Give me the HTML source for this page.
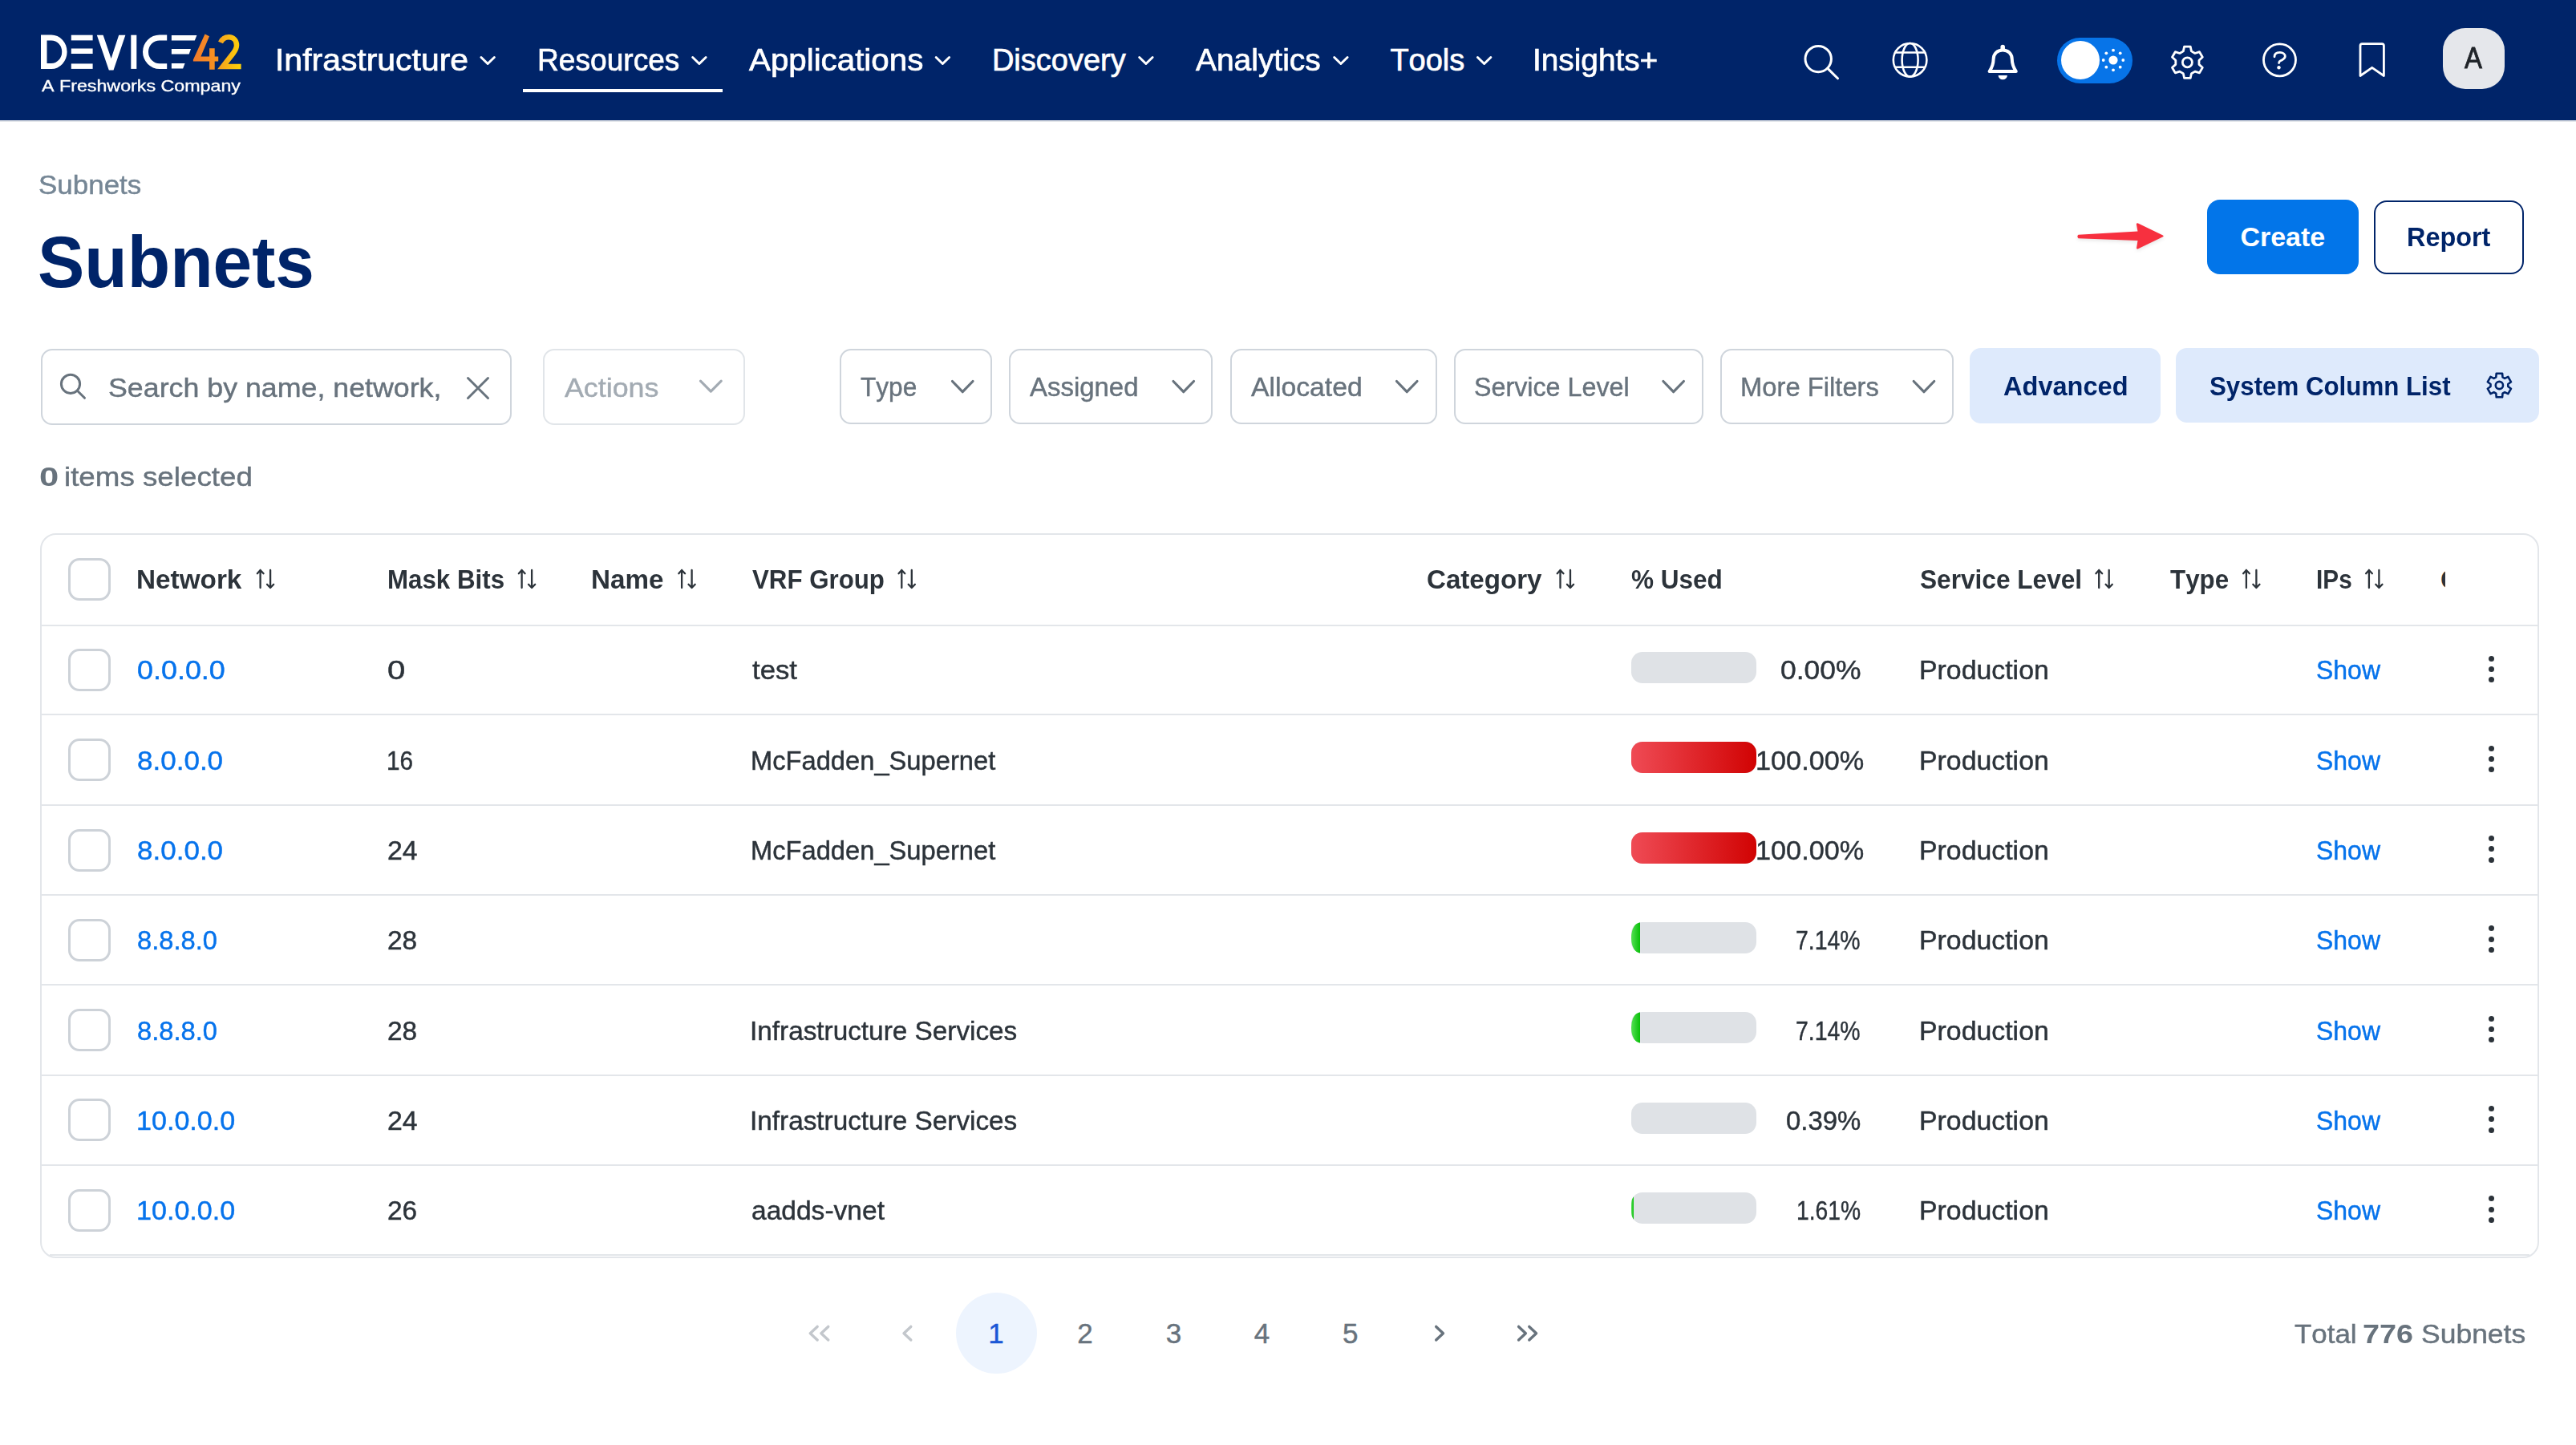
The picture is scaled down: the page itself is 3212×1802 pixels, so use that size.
<!DOCTYPE html><html><head><meta charset="utf-8"><style>
html,body{margin:0;padding:0;background:#fff;width:3212px;height:1802px;overflow:hidden;position:relative}
body{font-family:"Liberation Sans",sans-serif;font-kerning:none}
.t{position:absolute;white-space:nowrap;transform-origin:0 0}
.b{position:absolute;box-sizing:border-box}
</style></head><body>
<div class="b" style="left:0px;top:0px;width:3212px;height:150px;background:#002469"></div>
<div class="b" style="left:0px;top:150px;width:3212px;height:2px;background:#E4E7EB"></div>
<svg class="b" style="left:40px;top:30px" width="280" height="70" viewBox="40 30 280 70">
<defs>
<linearGradient id="g4" x1="0" x2="1" y1="0" y2="0"><stop offset="0" stop-color="#F37A2B"/><stop offset="1" stop-color="#F7951F"/></linearGradient>
<linearGradient id="g2" x1="0" x2="1" y1="0" y2="0"><stop offset="0" stop-color="#F6A51D"/><stop offset="1" stop-color="#FFD407"/></linearGradient>
</defs>
<path fill="#fff" fill-rule="evenodd" d="M51,43.4 H64 A19.6,21.3 0 0 1 64,86 H51 Z M58.5,50.4 H64 A13.2,14.25 0 0 1 64,78.9 H58.5 Z"/>
<rect fill="#fff" x="88.8" y="43.7" width="26.8" height="6.7"/>
<rect fill="#fff" x="88.8" y="60.5" width="26.8" height="6.5"/>
<rect fill="#fff" x="88.8" y="79.4" width="26.8" height="6.5"/>
<polygon fill="#fff" points="120.8,43.7 128.6,43.7 138.6,73 148.2,43.7 156.4,43.7 141.5,87.6 135.8,87.6"/>
<rect fill="#fff" x="163.3" y="43.7" width="7" height="42.2"/>
<path fill="#fff" d="M208.2,43.4 H199 A21,21.3 0 0 0 199,86 H208.2 V79.2 H199 A14,14.4 0 0 1 199,50.4 H208.2 Z"/>
<polygon fill="#fff" points="213.9,44 245.4,44 242.8,50.6 213.9,50.6"/>
<polygon fill="#fff" points="213.9,61.1 238,61.1 235.7,67.5 213.9,67.5"/>
<polygon fill="#fff" points="213.9,79.1 230.6,79.1 228.1,85.6 213.9,85.6"/>
<polygon fill="url(#g4)" points="255.5,42.6 261,45.2 250.4,70.6 261.1,70.6 261.1,60.3 267.7,60.3 267.7,70.6 272.2,70.6 272.2,76.6 267.7,76.6 267.7,86.7 261.1,86.7 261.1,76.6 240.9,76.6 240.9,74.5"/>
<path fill="none" stroke="url(#g2)" stroke-width="6.5" d="M275,53 C277,48.5 280.5,46.2 285.3,46.2 C291.2,46.2 295,50.6 295,56.3 C295,60.3 293.2,63.4 290.6,66.6 L277.8,82.9 L300.6,82.9"/>
</svg>
<div class="t" style="left:52.05px;top:97.40px;font-size:20px;line-height:20px;font-weight:400;color:#fff;transform:scaleX(1.1621);-webkit-text-stroke:0.35px #fff;">A Freshworks Company</div>
<div class="t" style="left:343.22px;top:56.25px;font-size:38px;line-height:38px;font-weight:400;color:#fff;transform:scaleX(1.0770);-webkit-text-stroke:0.7px #fff;">Infrastructure</div>
<svg class="b" style="left:596px;top:66px" width="24" height="20" viewBox="596 66 24 20"><path d="M599.95,71.5 L608.15,79.5 L616.35,71.5" fill="none" stroke="#fff" stroke-width="3" stroke-linecap="round" stroke-linejoin="round"/></svg>
<div class="t" style="left:669.96px;top:56.25px;font-size:38px;line-height:38px;font-weight:400;color:#fff;transform:scaleX(0.9766);-webkit-text-stroke:0.7px #fff;">Resources</div>
<svg class="b" style="left:860px;top:66px" width="24" height="20" viewBox="860 66 24 20"><path d="M863.7,71.5 L871.9,79.5 L880.1,71.5" fill="none" stroke="#fff" stroke-width="3" stroke-linecap="round" stroke-linejoin="round"/></svg>
<div class="t" style="left:933.67px;top:56.25px;font-size:38px;line-height:38px;font-weight:400;color:#fff;transform:scaleX(1.0604);-webkit-text-stroke:0.7px #fff;">Applications</div>
<svg class="b" style="left:1164px;top:66px" width="24" height="20" viewBox="1164 66 24 20"><path d="M1167.2,71.5 L1175.4,79.5 L1183.6,71.5" fill="none" stroke="#fff" stroke-width="3" stroke-linecap="round" stroke-linejoin="round"/></svg>
<div class="t" style="left:1236.88px;top:56.25px;font-size:38px;line-height:38px;font-weight:400;color:#fff;-webkit-text-stroke:0.7px #fff;">Discovery</div>
<svg class="b" style="left:1417px;top:66px" width="24" height="20" viewBox="1417 66 24 20"><path d="M1420.7,71.5 L1428.9,79.5 L1437.1,71.5" fill="none" stroke="#fff" stroke-width="3" stroke-linecap="round" stroke-linejoin="round"/></svg>
<div class="t" style="left:1491.17px;top:56.25px;font-size:38px;line-height:38px;font-weight:400;color:#fff;transform:scaleX(1.0242);-webkit-text-stroke:0.7px #fff;">Analytics</div>
<svg class="b" style="left:1660px;top:66px" width="24" height="20" viewBox="1660 66 24 20"><path d="M1663.7,71.5 L1671.9,79.5 L1680.1,71.5" fill="none" stroke="#fff" stroke-width="3" stroke-linecap="round" stroke-linejoin="round"/></svg>
<div class="t" style="left:1733.40px;top:56.25px;font-size:38px;line-height:38px;font-weight:400;color:#fff;-webkit-text-stroke:0.7px #fff;">Tools</div>
<svg class="b" style="left:1839px;top:66px" width="24" height="20" viewBox="1839 66 24 20"><path d="M1842.45,71.5 L1850.65,79.5 L1858.85,71.5" fill="none" stroke="#fff" stroke-width="3" stroke-linecap="round" stroke-linejoin="round"/></svg>
<div class="t" style="left:1911.42px;top:56.25px;font-size:38px;line-height:38px;font-weight:400;color:#fff;transform:scaleX(1.0202);-webkit-text-stroke:0.7px #fff;">Insights+</div>
<div class="b" style="left:652px;top:111px;width:249px;height:4px;background:#fff"></div>
<svg class="b" style="left:2230px;top:30px" width="310" height="80" viewBox="2230 30 310 80">
<g fill="none" stroke="#fff" stroke-width="3" stroke-linecap="round" stroke-linejoin="round">
<circle cx="2267.2" cy="73.6" r="16.2"/>
<line x1="2279" y1="85.4" x2="2291.5" y2="97.8"/>
<circle cx="2381.6" cy="74.8" r="20.8" stroke-width="2.6"/>
<ellipse cx="2381.6" cy="74.8" rx="10" ry="20.8" stroke-width="2.6"/>
<line x1="2363.2" y1="65.5" x2="2400" y2="65.5" stroke-width="2.6"/>
<line x1="2364" y1="83.8" x2="2399.2" y2="83.8" stroke-width="2.6"/>
<path d="M2480.6,89 L2513.8,89 C2510.8,84.5 2508.8,80 2508.8,74 C2508.8,67 2504,62.4 2497.2,62.4 C2490.4,62.4 2485.6,67 2485.6,74 C2485.6,80 2483.6,84.5 2480.6,89 Z" stroke-width="4"/>
<line x1="2497.2" y1="58.6" x2="2497.2" y2="61" stroke-width="5.5"/>
</g>
</svg>
<svg class="b" style="left:2485px;top:90px" width="25" height="12" viewBox="2485 90 25 12"><path d="M2491.6,94 H2502.9 A5.65,5.4 0 0 1 2491.6,94 Z" fill="#fff"/></svg>
<div class="b" style="left:2565px;top:47px;width:94px;height:57px;background:#0774E8;border-radius:29px"></div>
<div class="b" style="left:2570px;top:51px;width:48px;height:48px;background:#fff;border-radius:50%"></div>
<svg class="b" style="left:2615px;top:55px" width="40" height="40" viewBox="2615 55 40 40"><circle cx="2635" cy="75" r="5.6" fill="#fff"/><circle cx="2647.30" cy="75.00" r="1.9" fill="#fff"/><circle cx="2643.70" cy="83.70" r="1.9" fill="#fff"/><circle cx="2635.00" cy="87.30" r="1.9" fill="#fff"/><circle cx="2626.30" cy="83.70" r="1.9" fill="#fff"/><circle cx="2622.70" cy="75.00" r="1.9" fill="#fff"/><circle cx="2626.30" cy="66.30" r="1.9" fill="#fff"/><circle cx="2635.00" cy="62.70" r="1.9" fill="#fff"/><circle cx="2643.70" cy="66.30" r="1.9" fill="#fff"/></svg>
<svg class="b" style="left:2700px;top:50px" width="56" height="56" viewBox="2700 50 56 56"><path d="M2722.34,63.89 L2723.58,58.17 L2731.22,58.17 L2732.46,63.89 L2736.91,66.46 L2742.49,64.68 L2746.31,71.29 L2741.98,75.23 L2741.98,80.37 L2746.31,84.31 L2742.49,90.92 L2736.91,89.14 L2732.46,91.71 L2731.22,97.43 L2723.58,97.43 L2722.34,91.71 L2717.89,89.14 L2712.31,90.92 L2708.49,84.31 L2712.82,80.37 L2712.82,75.23 L2708.49,71.29 L2712.31,64.68 L2717.89,66.46 Z" fill="none" stroke="#fff" stroke-width="2.8" stroke-linejoin="round"/><circle cx="2727.4" cy="77.8" r="6" fill="none" stroke="#fff" stroke-width="2.8"/></svg>
<svg class="b" style="left:2815px;top:47px" width="55" height="56" viewBox="2815 47 55 56"><circle cx="2842.5" cy="74.8" r="20" fill="none" stroke="#fff" stroke-width="2.8"/><path d="M2836,70.8 C2836,67 2839,65.4 2842.8,65.4 C2846.6,65.4 2849.3,67.4 2849.3,70.3 C2849.3,73.4 2846.3,74.4 2843.9,75.6 C2842.1,76.5 2841.6,77.3 2841.6,78.6" fill="none" stroke="#fff" stroke-width="2.8" stroke-linecap="round"/><circle cx="2841.5" cy="84.2" r="2.2" fill="#fff"/></svg>
<svg class="b" style="left:2935px;top:47px" width="45" height="56" viewBox="2935 47 45 56"><path d="M2943,57 Q2943,54.6 2945.4,54.6 L2970,54.6 Q2972.4,54.6 2972.4,57 L2972.4,94.5 L2957.7,84.3 L2943,94.5 Z" fill="none" stroke="#fff" stroke-width="2.8" stroke-linejoin="round"/></svg>
<div class="b" style="left:3046px;top:35px;width:77px;height:76px;background:#E5E7EB;border-radius:28px"></div>
<div class="t" style="left:3073.34px;top:54.10px;font-size:37px;line-height:37px;font-weight:400;color:#1F2328;transform:scaleX(0.8886);-webkit-text-stroke:0.8px #1F2328;">A</div>
<div class="t" style="left:48.31px;top:213.20px;font-size:34px;line-height:34px;font-weight:400;color:#758695;transform:scaleX(1.0280);-webkit-text-stroke:0.45px #758695;">Subnets</div>
<div class="t" style="left:47.48px;top:281.60px;font-size:90px;line-height:90px;font-weight:700;color:#002469;transform:scaleX(0.9715);">Subnets</div>
<svg class="b" style="left:2585px;top:270px" width="120" height="50" viewBox="2585 270 120 50"><path d="M2591.5,292.8 L2665.5,288.6 L2663.8,279.2 Q2664.5,277.8 2666,278.4 L2697,293.6 Q2698.2,294.5 2697,295.3 L2666,310.2 Q2664.5,310.9 2664,309.4 L2665.5,300 L2591.5,297.2 Q2589.2,295 2591.5,292.8 Z" fill="#F7303F" style="filter:drop-shadow(0 2px 2px rgba(0,0,0,0.10))"/></svg>
<div class="b" style="left:2752px;top:249px;width:189px;height:93px;background:#0275E9;border-radius:16px"></div>
<div class="t" style="left:2793.41px;top:277.90px;font-size:34px;line-height:34px;font-weight:700;color:#fff;">Create</div>
<div class="b" style="left:2960px;top:249.5px;width:187px;height:92.0px;border:2.6px solid #002469;border-radius:16px;background:#fff"></div>
<div class="t" style="left:3001.33px;top:277.90px;font-size:34px;line-height:34px;font-weight:700;color:#002469;transform:scaleX(0.9526);">Report</div>
<div class="b" style="left:50.5px;top:434.5px;width:587.0px;height:95.5px;border:2px solid #CFD5DC;border-radius:14px"></div>
<svg class="b" style="left:70px;top:460px" width="42" height="42" viewBox="70 460 42 42"><circle cx="88" cy="478.8" r="11.6" fill="none" stroke="#68737D" stroke-width="3"/><line x1="96.4" y1="487.2" x2="105.5" y2="496.3" stroke="#68737D" stroke-width="3" stroke-linecap="round"/></svg>
<div class="t" style="left:134.78px;top:466.00px;font-size:34px;line-height:34px;font-weight:400;color:#68737D;transform:scaleX(1.0518);-webkit-text-stroke:0.45px #68737D;">Search by name, network,</div>
<svg class="b" style="left:578px;top:466px" width="36" height="34" viewBox="578 466 36 34"><path d="M583.5,471.5 L608.5,496.5 M608.5,471.5 L583.5,496.5" stroke="#68737D" stroke-width="3" stroke-linecap="round"/></svg>
<div class="b" style="left:676.5px;top:434.5px;width:252.0px;height:95.0px;border:2px solid #E1E5E9;border-radius:14px"></div>
<div class="t" style="left:703.93px;top:466.00px;font-size:34px;line-height:34px;font-weight:400;color:#A3ABB3;transform:scaleX(1.0526);-webkit-text-stroke:0.45px #A3ABB3;">Actions</div>
<svg class="b" style="left:868px;top:469px" width="37" height="25" viewBox="868 469 37 25"><path d="M873.5,475.1 L886.35,488.1 L899.2,475.1" fill="none" stroke="#A3ABB3" stroke-width="3.2" stroke-linecap="round" stroke-linejoin="round"/></svg>
<div class="b" style="left:1046.5px;top:434.5px;width:190.0px;height:94.5px;border:2px solid #CFD5DC;border-radius:14px"></div>
<div class="t" style="left:1073.19px;top:465.20px;font-size:34px;line-height:34px;font-weight:400;color:#68737D;transform:scaleX(0.9289);-webkit-text-stroke:0.45px #68737D;">Type</div>
<svg class="b" style="left:1182px;top:470px" width="37" height="25" viewBox="1182 470 37 25"><path d="M1187.5,475.5 L1200.25,488.7 L1213.0,475.5" fill="none" stroke="#68737D" stroke-width="3.2" stroke-linecap="round" stroke-linejoin="round"/></svg>
<div class="b" style="left:1257.5px;top:434.5px;width:254.5px;height:94.5px;border:2px solid #CFD5DC;border-radius:14px"></div>
<div class="t" style="left:1284.24px;top:465.20px;font-size:34px;line-height:34px;font-weight:400;color:#68737D;transform:scaleX(0.9687);-webkit-text-stroke:0.45px #68737D;">Assigned</div>
<svg class="b" style="left:1457px;top:470px" width="38" height="25" viewBox="1457 470 38 25"><path d="M1463.0,475.5 L1475.75,488.7 L1488.5,475.5" fill="none" stroke="#68737D" stroke-width="3.2" stroke-linecap="round" stroke-linejoin="round"/></svg>
<div class="b" style="left:1533.5px;top:434.5px;width:258.0px;height:94.5px;border:2px solid #CFD5DC;border-radius:14px"></div>
<div class="t" style="left:1560.43px;top:465.20px;font-size:34px;line-height:34px;font-weight:400;color:#68737D;transform:scaleX(0.9919);-webkit-text-stroke:0.45px #68737D;">Allocated</div>
<svg class="b" style="left:1736px;top:470px" width="37" height="25" viewBox="1736 470 37 25"><path d="M1741.5,475.5 L1754.25,488.7 L1767.0,475.5" fill="none" stroke="#68737D" stroke-width="3.2" stroke-linecap="round" stroke-linejoin="round"/></svg>
<div class="b" style="left:1812.5px;top:434.5px;width:311.5px;height:94.5px;border:2px solid #CFD5DC;border-radius:14px"></div>
<div class="t" style="left:1837.54px;top:465.20px;font-size:34px;line-height:34px;font-weight:400;color:#68737D;transform:scaleX(0.9487);-webkit-text-stroke:0.45px #68737D;">Service Level</div>
<svg class="b" style="left:2068px;top:470px" width="37" height="25" viewBox="2068 470 37 25"><path d="M2073.9,475.5 L2086.65,488.7 L2099.4,475.5" fill="none" stroke="#68737D" stroke-width="3.2" stroke-linecap="round" stroke-linejoin="round"/></svg>
<div class="b" style="left:2144.5px;top:434.5px;width:291.0px;height:94.5px;border:2px solid #CFD5DC;border-radius:14px"></div>
<div class="t" style="left:2169.51px;top:465.20px;font-size:34px;line-height:34px;font-weight:400;color:#68737D;transform:scaleX(0.9633);-webkit-text-stroke:0.45px #68737D;">More Filters</div>
<svg class="b" style="left:2380px;top:470px" width="38" height="25" viewBox="2380 470 38 25"><path d="M2386.2,475.5 L2398.95,488.7 L2411.7,475.5" fill="none" stroke="#68737D" stroke-width="3.2" stroke-linecap="round" stroke-linejoin="round"/></svg>
<div class="b" style="left:2456px;top:434px;width:238px;height:94px;background:#DEEAFC;border-radius:14px"></div>
<div class="t" style="left:2497.59px;top:464.20px;font-size:34px;line-height:34px;font-weight:700;color:#002469;transform:scaleX(0.9573);">Advanced</div>
<div class="b" style="left:2713px;top:434px;width:453px;height:93px;background:#DEEAFC;border-radius:14px"></div>
<div class="t" style="left:2754.80px;top:464.20px;font-size:34px;line-height:34px;font-weight:700;color:#002469;transform:scaleX(0.9197);">System Column List</div>
<svg class="b" style="left:3095px;top:459px" width="43" height="43" viewBox="3095 459 43 43"><path d="M3112.28,470.30 L3112.72,465.75 L3120.08,465.75 L3120.52,470.30 L3123.17,471.83 L3127.33,469.94 L3131.01,476.31 L3127.29,478.97 L3127.29,482.03 L3131.01,484.69 L3127.33,491.06 L3123.17,489.17 L3120.52,490.70 L3120.08,495.25 L3112.72,495.25 L3112.28,490.70 L3109.63,489.17 L3105.47,491.06 L3101.79,484.69 L3105.51,482.03 L3105.51,478.97 L3101.79,476.31 L3105.47,469.94 L3109.63,471.83 Z" fill="none" stroke="#002469" stroke-width="2.6" stroke-linejoin="round"/><circle cx="3116.4" cy="480.5" r="4.6" fill="none" stroke="#002469" stroke-width="2.6"/></svg>
<div class="t" style="left:48.98px;top:576.70px;font-size:34px;line-height:34px;font-weight:700;color:#68737D;transform:scaleX(1.2802);">0</div>
<div class="t" style="left:79.54px;top:576.70px;font-size:34px;line-height:34px;font-weight:400;color:#68737D;transform:scaleX(1.0806);-webkit-text-stroke:0.45px #68737D;">items selected</div>
<div class="b" style="left:50px;top:665px;width:3116px;height:904px;border:2px solid #E3E6EA;border-radius:20px"></div>
<div class="b" style="left:85px;top:696px;width:53px;height:53px;border:3.6px solid #CDD2D8;border-radius:14px;background:#fff"></div>
<div class="t" style="left:170.47px;top:706.00px;font-size:33px;line-height:33px;font-weight:700;color:#2C333A;transform:scaleX(1.0092);">Network</div>
<svg class="b" style="left:318px;top:706px" width="27" height="32" viewBox="318 706 27 32"><path d="M324.6,733 V711 M320.8,715.2 L324.6,711 L328.6,715.2 M337.1,711 V733 M333,728.8 L337.1,733 L341.2,728.8" fill="none" stroke="#2C333A" stroke-width="2.3" stroke-linecap="round" stroke-linejoin="round"/></svg>
<div class="t" style="left:483.21px;top:706.00px;font-size:33px;line-height:33px;font-weight:700;color:#2C333A;transform:scaleX(0.9482);">Mask Bits</div>
<svg class="b" style="left:644px;top:706px" width="27" height="32" viewBox="644 706 27 32"><path d="M650.6,733 V711 M646.8,715.2 L650.6,711 L654.6,715.2 M663.1,711 V733 M659,728.8 L663.1,733 L667.2,728.8" fill="none" stroke="#2C333A" stroke-width="2.3" stroke-linecap="round" stroke-linejoin="round"/></svg>
<div class="t" style="left:737.48px;top:706.00px;font-size:33px;line-height:33px;font-weight:700;color:#2C333A;transform:scaleX(1.0064);">Name</div>
<svg class="b" style="left:843px;top:706px" width="27" height="32" viewBox="843 706 27 32"><path d="M850.1,733 V711 M846.3,715.2 L850.1,711 L854.1,715.2 M862.6,711 V733 M858.5,728.8 L862.6,733 L866.7,728.8" fill="none" stroke="#2C333A" stroke-width="2.3" stroke-linecap="round" stroke-linejoin="round"/></svg>
<div class="t" style="left:938.09px;top:706.00px;font-size:33px;line-height:33px;font-weight:700;color:#2C333A;transform:scaleX(0.9468);">VRF Group</div>
<svg class="b" style="left:1117px;top:706px" width="27" height="32" viewBox="1117 706 27 32"><path d="M1124.3,733 V711 M1120.5,715.2 L1124.3,711 L1128.3,715.2 M1136.8,711 V733 M1132.7,728.8 L1136.8,733 L1140.9,728.8" fill="none" stroke="#2C333A" stroke-width="2.3" stroke-linecap="round" stroke-linejoin="round"/></svg>
<div class="t" style="left:1778.84px;top:706.00px;font-size:33px;line-height:33px;font-weight:700;color:#2C333A;transform:scaleX(1.0035);">Category</div>
<svg class="b" style="left:1938px;top:706px" width="27" height="32" viewBox="1938 706 27 32"><path d="M1945.5,733 V711 M1941.7,715.2 L1945.5,711 L1949.5,715.2 M1958.0,711 V733 M1953.9,728.8 L1958.0,733 L1962.1000000000001,728.8" fill="none" stroke="#2C333A" stroke-width="2.3" stroke-linecap="round" stroke-linejoin="round"/></svg>
<div class="t" style="left:2034.12px;top:706.00px;font-size:33px;line-height:33px;font-weight:700;color:#2C333A;transform:scaleX(0.9552);">% Used</div>
<div class="t" style="left:2393.99px;top:706.00px;font-size:33px;line-height:33px;font-weight:700;color:#2C333A;transform:scaleX(0.9581);">Service Level</div>
<svg class="b" style="left:2610px;top:706px" width="27" height="32" viewBox="2610 706 27 32"><path d="M2617.2,733 V711 M2613.4,715.2 L2617.2,711 L2621.2,715.2 M2629.7,711 V733 M2625.6,728.8 L2629.7,733 L2633.7999999999997,728.8" fill="none" stroke="#2C333A" stroke-width="2.3" stroke-linecap="round" stroke-linejoin="round"/></svg>
<div class="t" style="left:2706.35px;top:706.00px;font-size:33px;line-height:33px;font-weight:700;color:#2C333A;transform:scaleX(0.9494);">Type</div>
<svg class="b" style="left:2794px;top:706px" width="27" height="32" viewBox="2794 706 27 32"><path d="M2800.9,733 V711 M2797.1000000000004,715.2 L2800.9,711 L2804.9,715.2 M2813.4,711 V733 M2809.3,728.8 L2813.4,733 L2817.5,728.8" fill="none" stroke="#2C333A" stroke-width="2.3" stroke-linecap="round" stroke-linejoin="round"/></svg>
<div class="t" style="left:2887.91px;top:706.00px;font-size:33px;line-height:33px;font-weight:700;color:#2C333A;transform:scaleX(0.9027);">IPs</div>
<svg class="b" style="left:2947px;top:706px" width="27" height="32" viewBox="2947 706 27 32"><path d="M2953.9,733 V711 M2950.1000000000004,715.2 L2953.9,711 L2957.9,715.2 M2966.4,711 V733 M2962.3,728.8 L2966.4,733 L2970.5,728.8" fill="none" stroke="#2C333A" stroke-width="2.3" stroke-linecap="round" stroke-linejoin="round"/></svg>
<div class="b" style="left:3040px;top:700px;width:9px;height:40px;overflow:hidden"><div class="t" style="left:3px;top:6px;font-size:33px;line-height:33px;font-weight:700;color:#2C333A">C</div></div>
<div class="b" style="left:52px;top:779px;width:3112px;height:2px;background:#E3E6EA"></div>
<div class="b" style="left:52px;top:890px;width:3112px;height:2px;background:#E3E6EA"></div>
<div class="b" style="left:52px;top:1002.5px;width:3112px;height:2.0px;background:#E3E6EA"></div>
<div class="b" style="left:52px;top:1115px;width:3112px;height:2px;background:#E3E6EA"></div>
<div class="b" style="left:52px;top:1227px;width:3112px;height:2px;background:#E3E6EA"></div>
<div class="b" style="left:52px;top:1340px;width:3112px;height:2px;background:#E3E6EA"></div>
<div class="b" style="left:52px;top:1452px;width:3112px;height:2px;background:#E3E6EA"></div>
<div class="b" style="left:62px;top:1564px;width:3092px;height:2px;background:#E3E6EA"></div>
<div class="b" style="left:85px;top:809px;width:53px;height:53px;border:3.6px solid #CDD2D8;border-radius:14px;background:#fff"></div>
<div class="t" style="left:171.20px;top:819.30px;font-size:33px;line-height:33px;font-weight:400;color:#0673EC;transform:scaleX(1.0881);-webkit-text-stroke:0.45px #0673EC;">0.0.0.0</div>
<div class="t" style="left:482.93px;top:819.30px;font-size:33px;line-height:33px;font-weight:400;color:#2C333A;transform:scaleX(1.2171);-webkit-text-stroke:0.45px #2C333A;">0</div>
<div class="t" style="left:937.78px;top:819.30px;font-size:33px;line-height:33px;font-weight:400;color:#2C333A;transform:scaleX(1.0505);-webkit-text-stroke:0.45px #2C333A;">test</div>
<div class="b" style="left:2034px;top:813.00px;width:156px;height:39px;background:#DFE2E6;border-radius:14px;overflow:hidden"></div>
<div class="t" style="left:2219.51px;top:819.30px;font-size:33px;line-height:33px;font-weight:400;color:#2C333A;transform:scaleX(1.0746);-webkit-text-stroke:0.45px #2C333A;">0.00%</div>
<div class="t" style="left:2392.62px;top:819.30px;font-size:33px;line-height:33px;font-weight:400;color:#2C333A;transform:scaleX(1.0254);-webkit-text-stroke:0.45px #2C333A;">Production</div>
<div class="t" style="left:2887.95px;top:819.30px;font-size:33px;line-height:33px;font-weight:400;color:#0673EC;transform:scaleX(0.9688);-webkit-text-stroke:0.45px #0673EC;">Show</div>
<div class="b" style="left:3103.2px;top:817.50px;width:7px;height:7px;border-radius:50%;background:#2C333A"></div>
<div class="b" style="left:3103.2px;top:830.80px;width:7px;height:7px;border-radius:50%;background:#2C333A"></div>
<div class="b" style="left:3103.2px;top:844.10px;width:7px;height:7px;border-radius:50%;background:#2C333A"></div>
<div class="b" style="left:85px;top:921px;width:53px;height:53px;border:3.6px solid #CDD2D8;border-radius:14px;background:#fff"></div>
<div class="t" style="left:171.08px;top:931.60px;font-size:33px;line-height:33px;font-weight:400;color:#0673EC;transform:scaleX(1.0612);-webkit-text-stroke:0.45px #0673EC;">8.0.0.0</div>
<div class="t" style="left:482.24px;top:931.60px;font-size:33px;line-height:33px;font-weight:400;color:#2C333A;transform:scaleX(0.9010);-webkit-text-stroke:0.45px #2C333A;">16</div>
<div class="t" style="left:935.62px;top:931.60px;font-size:33px;line-height:33px;font-weight:400;color:#2C333A;transform:scaleX(0.9903);-webkit-text-stroke:0.45px #2C333A;">McFadden_Supernet</div>
<div class="b" style="left:2034px;top:925.30px;width:156px;height:39px;background:#DFE2E6;border-radius:14px;overflow:hidden"><div style="position:absolute;left:0;top:0;width:100%;height:100%;background:linear-gradient(90deg,#EF4B55,#D10303)"></div></div>
<div class="t" style="left:2188.99px;top:931.60px;font-size:33px;line-height:33px;font-weight:400;color:#2C333A;transform:scaleX(1.0380);-webkit-text-stroke:0.45px #2C333A;">100.00%</div>
<div class="t" style="left:2392.62px;top:931.60px;font-size:33px;line-height:33px;font-weight:400;color:#2C333A;transform:scaleX(1.0254);-webkit-text-stroke:0.45px #2C333A;">Production</div>
<div class="t" style="left:2887.95px;top:931.60px;font-size:33px;line-height:33px;font-weight:400;color:#0673EC;transform:scaleX(0.9688);-webkit-text-stroke:0.45px #0673EC;">Show</div>
<div class="b" style="left:3103.2px;top:929.80px;width:7px;height:7px;border-radius:50%;background:#2C333A"></div>
<div class="b" style="left:3103.2px;top:943.10px;width:7px;height:7px;border-radius:50%;background:#2C333A"></div>
<div class="b" style="left:3103.2px;top:956.40px;width:7px;height:7px;border-radius:50%;background:#2C333A"></div>
<div class="b" style="left:85px;top:1034px;width:53px;height:53px;border:3.6px solid #CDD2D8;border-radius:14px;background:#fff"></div>
<div class="t" style="left:171.08px;top:1043.90px;font-size:33px;line-height:33px;font-weight:400;color:#0673EC;transform:scaleX(1.0612);-webkit-text-stroke:0.45px #0673EC;">8.0.0.0</div>
<div class="t" style="left:482.80px;top:1043.90px;font-size:33px;line-height:33px;font-weight:400;color:#2C333A;transform:scaleX(1.0241);-webkit-text-stroke:0.45px #2C333A;">24</div>
<div class="t" style="left:935.62px;top:1043.90px;font-size:33px;line-height:33px;font-weight:400;color:#2C333A;transform:scaleX(0.9903);-webkit-text-stroke:0.45px #2C333A;">McFadden_Supernet</div>
<div class="b" style="left:2034px;top:1037.60px;width:156px;height:39px;background:#DFE2E6;border-radius:14px;overflow:hidden"><div style="position:absolute;left:0;top:0;width:100%;height:100%;background:linear-gradient(90deg,#EF4B55,#D10303)"></div></div>
<div class="t" style="left:2188.99px;top:1043.90px;font-size:33px;line-height:33px;font-weight:400;color:#2C333A;transform:scaleX(1.0380);-webkit-text-stroke:0.45px #2C333A;">100.00%</div>
<div class="t" style="left:2392.62px;top:1043.90px;font-size:33px;line-height:33px;font-weight:400;color:#2C333A;transform:scaleX(1.0254);-webkit-text-stroke:0.45px #2C333A;">Production</div>
<div class="t" style="left:2887.95px;top:1043.90px;font-size:33px;line-height:33px;font-weight:400;color:#0673EC;transform:scaleX(0.9688);-webkit-text-stroke:0.45px #0673EC;">Show</div>
<div class="b" style="left:3103.2px;top:1042.10px;width:7px;height:7px;border-radius:50%;background:#2C333A"></div>
<div class="b" style="left:3103.2px;top:1055.40px;width:7px;height:7px;border-radius:50%;background:#2C333A"></div>
<div class="b" style="left:3103.2px;top:1068.70px;width:7px;height:7px;border-radius:50%;background:#2C333A"></div>
<div class="b" style="left:85px;top:1146px;width:53px;height:53px;border:3.6px solid #CDD2D8;border-radius:14px;background:#fff"></div>
<div class="t" style="left:171.18px;top:1156.20px;font-size:33px;line-height:33px;font-weight:400;color:#0673EC;transform:scaleX(0.9899);-webkit-text-stroke:0.45px #0673EC;">8.8.8.0</div>
<div class="t" style="left:482.82px;top:1156.20px;font-size:33px;line-height:33px;font-weight:400;color:#2C333A;transform:scaleX(1.0115);-webkit-text-stroke:0.45px #2C333A;">28</div>
<div class="b" style="left:2034px;top:1149.90px;width:156px;height:39px;background:#DFE2E6;border-radius:14px;overflow:hidden"><div style="position:absolute;left:0;top:0;width:11.14px;height:100%;background:linear-gradient(90deg,#55E055,#08BF08);border-radius:100% 0 0 100%/50% 0 0 50%"></div></div>
<div class="t" style="left:2239.35px;top:1156.20px;font-size:33px;line-height:33px;font-weight:400;color:#2C333A;transform:scaleX(0.8600);-webkit-text-stroke:0.45px #2C333A;">7.14%</div>
<div class="t" style="left:2392.62px;top:1156.20px;font-size:33px;line-height:33px;font-weight:400;color:#2C333A;transform:scaleX(1.0254);-webkit-text-stroke:0.45px #2C333A;">Production</div>
<div class="t" style="left:2887.95px;top:1156.20px;font-size:33px;line-height:33px;font-weight:400;color:#0673EC;transform:scaleX(0.9688);-webkit-text-stroke:0.45px #0673EC;">Show</div>
<div class="b" style="left:3103.2px;top:1154.40px;width:7px;height:7px;border-radius:50%;background:#2C333A"></div>
<div class="b" style="left:3103.2px;top:1167.70px;width:7px;height:7px;border-radius:50%;background:#2C333A"></div>
<div class="b" style="left:3103.2px;top:1181.00px;width:7px;height:7px;border-radius:50%;background:#2C333A"></div>
<div class="b" style="left:85px;top:1258px;width:53px;height:53px;border:3.6px solid #CDD2D8;border-radius:14px;background:#fff"></div>
<div class="t" style="left:171.18px;top:1268.50px;font-size:33px;line-height:33px;font-weight:400;color:#0673EC;transform:scaleX(0.9899);-webkit-text-stroke:0.45px #0673EC;">8.8.8.0</div>
<div class="t" style="left:482.82px;top:1268.50px;font-size:33px;line-height:33px;font-weight:400;color:#2C333A;transform:scaleX(1.0115);-webkit-text-stroke:0.45px #2C333A;">28</div>
<div class="t" style="left:935.23px;top:1268.50px;font-size:33px;line-height:33px;font-weight:400;color:#2C333A;transform:scaleX(1.0096);-webkit-text-stroke:0.45px #2C333A;">Infrastructure Services</div>
<div class="b" style="left:2034px;top:1262.20px;width:156px;height:39px;background:#DFE2E6;border-radius:14px;overflow:hidden"><div style="position:absolute;left:0;top:0;width:11.14px;height:100%;background:linear-gradient(90deg,#55E055,#08BF08);border-radius:100% 0 0 100%/50% 0 0 50%"></div></div>
<div class="t" style="left:2239.35px;top:1268.50px;font-size:33px;line-height:33px;font-weight:400;color:#2C333A;transform:scaleX(0.8600);-webkit-text-stroke:0.45px #2C333A;">7.14%</div>
<div class="t" style="left:2392.62px;top:1268.50px;font-size:33px;line-height:33px;font-weight:400;color:#2C333A;transform:scaleX(1.0254);-webkit-text-stroke:0.45px #2C333A;">Production</div>
<div class="t" style="left:2887.95px;top:1268.50px;font-size:33px;line-height:33px;font-weight:400;color:#0673EC;transform:scaleX(0.9688);-webkit-text-stroke:0.45px #0673EC;">Show</div>
<div class="b" style="left:3103.2px;top:1266.70px;width:7px;height:7px;border-radius:50%;background:#2C333A"></div>
<div class="b" style="left:3103.2px;top:1280.00px;width:7px;height:7px;border-radius:50%;background:#2C333A"></div>
<div class="b" style="left:3103.2px;top:1293.30px;width:7px;height:7px;border-radius:50%;background:#2C333A"></div>
<div class="b" style="left:85px;top:1370px;width:53px;height:53px;border:3.6px solid #CDD2D8;border-radius:14px;background:#fff"></div>
<div class="t" style="left:170.00px;top:1380.80px;font-size:33px;line-height:33px;font-weight:400;color:#0673EC;transform:scaleX(1.0332);-webkit-text-stroke:0.45px #0673EC;">10.0.0.0</div>
<div class="t" style="left:482.80px;top:1380.80px;font-size:33px;line-height:33px;font-weight:400;color:#2C333A;transform:scaleX(1.0241);-webkit-text-stroke:0.45px #2C333A;">24</div>
<div class="t" style="left:935.23px;top:1380.80px;font-size:33px;line-height:33px;font-weight:400;color:#2C333A;transform:scaleX(1.0096);-webkit-text-stroke:0.45px #2C333A;">Infrastructure Services</div>
<div class="b" style="left:2034px;top:1374.50px;width:156px;height:39px;background:#DFE2E6;border-radius:14px;overflow:hidden"></div>
<div class="t" style="left:2226.72px;top:1380.80px;font-size:33px;line-height:33px;font-weight:400;color:#2C333A;transform:scaleX(0.9967);-webkit-text-stroke:0.45px #2C333A;">0.39%</div>
<div class="t" style="left:2392.62px;top:1380.80px;font-size:33px;line-height:33px;font-weight:400;color:#2C333A;transform:scaleX(1.0254);-webkit-text-stroke:0.45px #2C333A;">Production</div>
<div class="t" style="left:2887.95px;top:1380.80px;font-size:33px;line-height:33px;font-weight:400;color:#0673EC;transform:scaleX(0.9688);-webkit-text-stroke:0.45px #0673EC;">Show</div>
<div class="b" style="left:3103.2px;top:1379.00px;width:7px;height:7px;border-radius:50%;background:#2C333A"></div>
<div class="b" style="left:3103.2px;top:1392.30px;width:7px;height:7px;border-radius:50%;background:#2C333A"></div>
<div class="b" style="left:3103.2px;top:1405.60px;width:7px;height:7px;border-radius:50%;background:#2C333A"></div>
<div class="b" style="left:85px;top:1483px;width:53px;height:53px;border:3.6px solid #CDD2D8;border-radius:14px;background:#fff"></div>
<div class="t" style="left:170.00px;top:1493.10px;font-size:33px;line-height:33px;font-weight:400;color:#0673EC;transform:scaleX(1.0332);-webkit-text-stroke:0.45px #0673EC;">10.0.0.0</div>
<div class="t" style="left:482.82px;top:1493.10px;font-size:33px;line-height:33px;font-weight:400;color:#2C333A;transform:scaleX(1.0120);-webkit-text-stroke:0.45px #2C333A;">26</div>
<div class="t" style="left:936.88px;top:1493.10px;font-size:33px;line-height:33px;font-weight:400;color:#2C333A;transform:scaleX(1.0165);-webkit-text-stroke:0.45px #2C333A;">aadds-vnet</div>
<div class="b" style="left:2034px;top:1486.80px;width:156px;height:39px;background:#DFE2E6;border-radius:14px;overflow:hidden"><div style="position:absolute;left:0;top:0;width:2.51px;height:100%;background:linear-gradient(90deg,#55E055,#08BF08);border-radius:100% 0 0 100%/50% 0 0 50%"></div></div>
<div class="t" style="left:2239.75px;top:1493.10px;font-size:33px;line-height:33px;font-weight:400;color:#2C333A;transform:scaleX(0.8556);-webkit-text-stroke:0.45px #2C333A;">1.61%</div>
<div class="t" style="left:2392.62px;top:1493.10px;font-size:33px;line-height:33px;font-weight:400;color:#2C333A;transform:scaleX(1.0254);-webkit-text-stroke:0.45px #2C333A;">Production</div>
<div class="t" style="left:2887.95px;top:1493.10px;font-size:33px;line-height:33px;font-weight:400;color:#0673EC;transform:scaleX(0.9688);-webkit-text-stroke:0.45px #0673EC;">Show</div>
<div class="b" style="left:3103.2px;top:1491.30px;width:7px;height:7px;border-radius:50%;background:#2C333A"></div>
<div class="b" style="left:3103.2px;top:1504.60px;width:7px;height:7px;border-radius:50%;background:#2C333A"></div>
<div class="b" style="left:3103.2px;top:1517.90px;width:7px;height:7px;border-radius:50%;background:#2C333A"></div>
<div class="b" style="left:1192px;top:1611.5px;width:101px;height:101.0px;background:#EDF4FE;border-radius:50%"></div>
<svg class="b" style="left:995px;top:1645px" width="43" height="36" viewBox="995 1645 43 36"><path d="M1019.0999999999999,1654.4 L1010.3,1662.7 L1019.0999999999999,1671.0 M1032.7,1654.4 L1023.9,1662.7 L1032.7,1671.0 " fill="none" stroke="#C3C7CC" stroke-width="3.4" stroke-linecap="round" stroke-linejoin="round"/></svg>
<svg class="b" style="left:1112px;top:1645px" width="30" height="36" viewBox="1112 1645 30 36"><path d="M1135.8,1654.4 L1127,1662.7 L1135.8,1671.0 " fill="none" stroke="#C3C7CC" stroke-width="3.4" stroke-linecap="round" stroke-linejoin="round"/></svg>
<svg class="b" style="left:1784px;top:1645px" width="30" height="36" viewBox="1784 1645 30 36"><path d="M1790.7,1654.4 L1799.5,1662.7 L1790.7,1671.0 " fill="none" stroke="#68737D" stroke-width="3.4" stroke-linecap="round" stroke-linejoin="round"/></svg>
<svg class="b" style="left:1887px;top:1645px" width="43" height="36" viewBox="1887 1645 43 36"><path d="M1893.6000000000001,1654.4 L1902.4,1662.7 L1893.6000000000001,1671.0 M1906.8,1654.4 L1915.6,1662.7 L1906.8,1671.0 " fill="none" stroke="#68737D" stroke-width="3.4" stroke-linecap="round" stroke-linejoin="round"/></svg>
<div class="t" style="left:1232.19px;top:1645.00px;font-size:35px;line-height:35px;font-weight:400;color:#1A57D6;-webkit-text-stroke:0.45px #1A57D6;">1</div>
<div class="t" style="left:1343.27px;top:1645.00px;font-size:35px;line-height:35px;font-weight:400;color:#68737D;-webkit-text-stroke:0.45px #68737D;">2</div>
<div class="t" style="left:1453.77px;top:1645.00px;font-size:35px;line-height:35px;font-weight:400;color:#68737D;-webkit-text-stroke:0.45px #68737D;">3</div>
<div class="t" style="left:1563.78px;top:1645.00px;font-size:35px;line-height:35px;font-weight:400;color:#68737D;-webkit-text-stroke:0.45px #68737D;">4</div>
<div class="t" style="left:1674.00px;top:1645.00px;font-size:35px;line-height:35px;font-weight:400;color:#68737D;-webkit-text-stroke:0.45px #68737D;">5</div>
<div class="t" style="left:2860.52px;top:1645.90px;font-size:34px;line-height:34px;font-weight:400;color:#68737D;transform:scaleX(1.0269);-webkit-text-stroke:0.45px #68737D;">Total</div>
<div class="t" style="left:2946.38px;top:1645.90px;font-size:34px;line-height:34px;font-weight:700;color:#68737D;transform:scaleX(1.1103);">776</div>
<div class="t" style="left:3019.29px;top:1645.90px;font-size:34px;line-height:34px;font-weight:400;color:#68737D;transform:scaleX(1.0435);-webkit-text-stroke:0.45px #68737D;">Subnets</div>
</body></html>
